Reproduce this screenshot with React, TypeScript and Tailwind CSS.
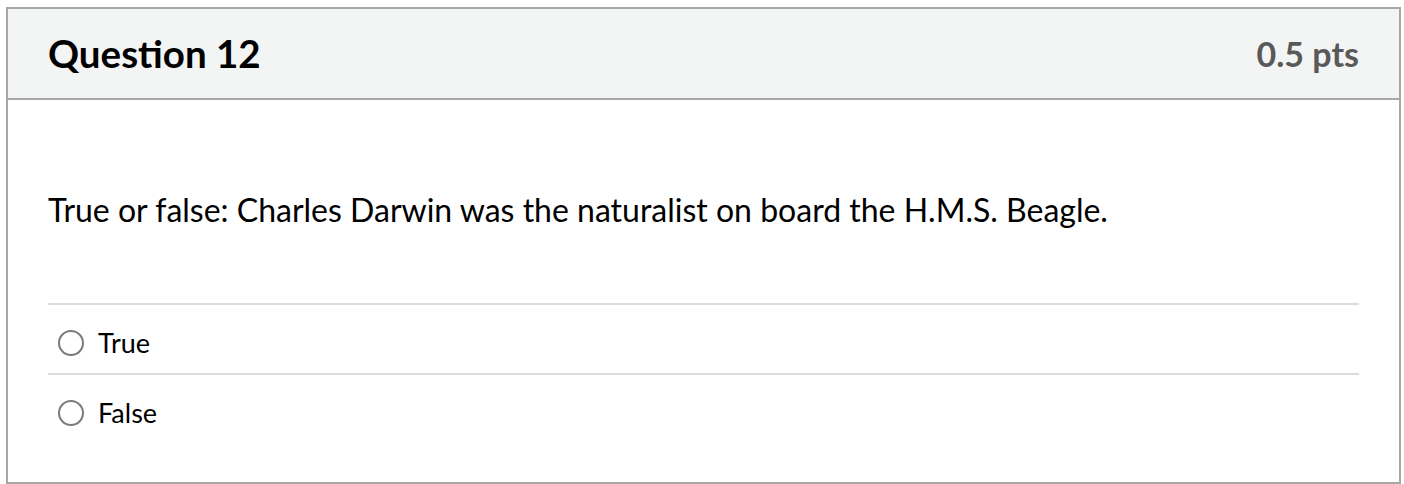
import React from "react";

function Radio() {
  return (
    <span className="inline-block w-[26px] h-[26px] rounded-full border-[2px] border-[#7a7a7a] bg-white shrink-0" />
  );
}

export default function App() {
  return (
    <div className="w-[1404px] h-[484px] bg-white pl-[6px] pt-[7px] pr-[3px] font-['Lato','Liberation_Sans',sans-serif] text-black">
      <div className="h-[477px] border-[2px] border-[#a7a7a7] flex flex-col">
        <div className="h-[91px] bg-[#f3f4f4] border-b-[2px] border-[#a7a7a7] flex items-center justify-between px-[40px]">
          <h2 className="text-[38.5px] font-bold leading-none">Question 12</h2>
          <div className="text-[34px] font-bold leading-none text-[#595959]">0.5 pts</div>
        </div>
        <div className="px-[40px]">
          <div className="pt-[94px] pb-[77px]">
            <p className="text-[32px] leading-none">True or false: Charles Darwin was the naturalist on board the H.M.S. Beagle.</p>
          </div>
          <div className="border-t-[2px] border-[#dcdcdc] h-[70px] pt-[7px] flex items-center gap-[14px] pl-[10px]">
            <Radio />
            <span className="text-[27px] leading-none">True</span>
          </div>
          <div className="border-t-[2px] border-[#dcdcdc] h-[70px] pt-[7px] flex items-center gap-[14px] pl-[10px]">
            <Radio />
            <span className="text-[27px] leading-none">False</span>
          </div>
        </div>
      </div>
    </div>
  );
}
